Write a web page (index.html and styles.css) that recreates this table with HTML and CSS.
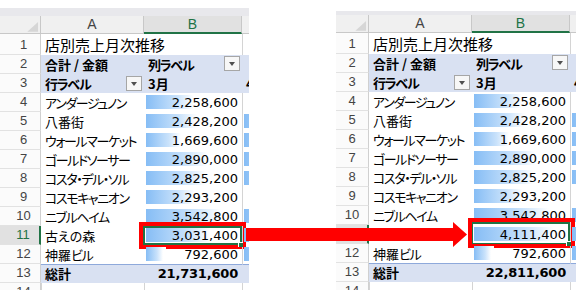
FILE: index.html
```html
<!DOCTYPE html>
<html lang="ja">
<head>
<meta charset="utf-8">
<link rel="stylesheet" href="styles.css">
</head>
<body>
<div class="page">
  <div class="sheet sheet-l">
    <div class="strip"></div>
    <div class="grid">
      <div class="corner"><svg width="41" height="18" viewBox="0 0 41 18"><polygon points="39,6 39,16 28,16" fill="#d6d6d6"/></svg></div>
      <div class="ch">A</div><div class="ch ch-sel">B</div><div class="ch ch-c"></div>

      <div class="rh">1</div><div class="cell title">店別売上月次推移</div><div class="cell cc gl"></div>

      <div class="rh">2</div><div class="cell pv b">合計 / 金額</div><div class="cell pv b sp"><span class="k1">列ラベル</span><span class="dd"></span></div><div class="cell pv cc"></div>
      <div class="rh">3</div><div class="cell pv b sp"><span class="k1">行ラベル</span><span class="dd dd3"></span></div><div class="cell pv b">3月</div><div class="cell pv b cc">4月</div>

      <div class="rh">4</div><div class="cell k">アンダージュノン</div><div class="cell num" style="background-size:56px 14px">2,258,600</div><div class="cell cc gl"></div>
      <div class="rh">5</div><div class="cell">八番街</div><div class="cell num" style="background-size:60px 14px">2,428,200</div><div class="cell cc bar"></div>
      <div class="rh">6</div><div class="cell k">ウォールマーケット</div><div class="cell num" style="background-size:41px 14px">1,669,600</div><div class="cell cc bar"></div>
      <div class="rh">7</div><div class="cell k">ゴールドソーサー</div><div class="cell num" style="background-size:72px 14px">2,890,000</div><div class="cell cc bar"></div>
      <div class="rh">8</div><div class="cell k">コスタ・デル・ソル</div><div class="cell num" style="background-size:70px 14px">2,825,200</div><div class="cell cc bar"></div>
      <div class="rh">9</div><div class="cell k">コスモキャニオン</div><div class="cell num" style="background-size:57px 14px">2,293,200</div><div class="cell cc gl"></div>
      <div class="rh">10</div><div class="cell k">ニブルヘイム</div><div class="cell num" style="background-size:88px 14px">3,542,800</div><div class="cell cc bar"></div>
      <div class="rh rh-sel">11</div><div class="cell">古えの森</div><div class="cell num sel sel-l" style="background-size:75px 14px">3,031,400<span class="handle"></span></div><div class="cell cc bar"></div>
      <div class="rh">12</div><div class="cell">神羅<span class="k1">ビル</span></div><div class="cell num" style="background-size:20px 14px">792,600</div><div class="cell cc bar"></div>
      <div class="rh">13</div><div class="cell tot b">総計</div><div class="cell tot num bn">21,731,600</div><div class="cell tot cc"></div>
      <div class="rh">14</div><div class="cell gl"></div><div class="cell gl"></div><div class="cell cc gl"></div>
    </div>
  </div>

  <div class="sheet sheet-r">
    <div class="strip"></div>
    <div class="grid">
      <div class="corner"><svg width="33" height="18" viewBox="0 0 33 18"><polygon points="31,6 31,16 20,16" fill="#d6d6d6"/></svg></div>
      <div class="ch">A</div><div class="ch ch-sel">B</div><div class="ch ch-c"></div>

      <div class="rh">1</div><div class="cell title">店別売上月次推移</div><div class="cell cc gl"></div>

      <div class="rh">2</div><div class="cell pv b">合計 / 金額</div><div class="cell pv b sp"><span class="k1">列ラベル</span><span class="dd"></span></div><div class="cell pv cc"></div>
      <div class="rh">3</div><div class="cell pv b sp"><span class="k1">行ラベル</span><span class="dd dd3"></span></div><div class="cell pv b">3月</div><div class="cell pv b cc">4月</div>

      <div class="rh">4</div><div class="cell k">アンダージュノン</div><div class="cell num" style="background-size:56px 14px">2,258,600</div><div class="cell cc gl"></div>
      <div class="rh">5</div><div class="cell">八番街</div><div class="cell num" style="background-size:60px 14px">2,428,200</div><div class="cell cc bar"></div>
      <div class="rh">6</div><div class="cell k">ウォールマーケット</div><div class="cell num" style="background-size:41px 14px">1,669,600</div><div class="cell cc bar"></div>
      <div class="rh">7</div><div class="cell k">ゴールドソーサー</div><div class="cell num" style="background-size:72px 14px">2,890,000</div><div class="cell cc bar"></div>
      <div class="rh">8</div><div class="cell k">コスタ・デル・ソル</div><div class="cell num" style="background-size:70px 14px">2,825,200</div><div class="cell cc bar"></div>
      <div class="rh">9</div><div class="cell k">コスモキャニオン</div><div class="cell num" style="background-size:57px 14px">2,293,200</div><div class="cell cc gl"></div>
      <div class="rh">10</div><div class="cell k">ニブルヘイム</div><div class="cell num" style="background-size:88px 14px">3,542,800</div><div class="cell cc bar"></div>
      <div class="rh rh-sel">11</div><div class="cell"></div><div class="cell num sel sel-r" style="background-size:94px 14px">4,111,400<span class="handle"></span></div><div class="cell cc bar"></div>
      <div class="rh">12</div><div class="cell">神羅<span class="k1">ビル</span></div><div class="cell num" style="background-size:20px 14px">792,600</div><div class="cell cc bar"></div>
      <div class="rh">13</div><div class="cell tot b">総計</div><div class="cell tot num bn">22,811,600</div><div class="cell tot cc"></div>
      <div class="rh">14</div><div class="cell gl"></div><div class="cell gl"></div><div class="cell cc gl"></div>
    </div>
  </div>

  <svg class="arrow" width="586" height="290" viewBox="0 0 586 290">
    <polygon points="246,228 453,228 453,222 467,234.5 453,247 453,241 246,241" fill="#ff0000"/>
  </svg>
</div>
</body>
</html>
```

FILE: styles.css
```css
* { box-sizing: border-box; }

body {
  margin: 0;
  background: #ffffff;
}

.page {
  position: relative;
  width: 586px;
  height: 290px;
  overflow: hidden;
  display: flex;
  gap: 87px;
  font-family: "Noto Sans CJK JP", sans-serif;
  color: #000;
}

.sheet {
  flex: none;
  overflow: hidden;
  height: 290px;
}

.sheet-l { width: 249px; padding-top: 8px; }
.sheet-r { width: 240px; padding-top: 11px; }

.strip { background: #e8e8ec; }
.sheet-l .strip { height: 8px; }
.sheet-r .strip { height: 4px; }

.grid {
  display: grid;
  grid-template-rows: 18px 21px repeat(12, 19px) 19px;
}

.sheet-l .grid { grid-template-columns: 41px 103px 98px 7px; }
.sheet-r .grid { grid-template-columns: 33px 103px 98px 6px; }

/* headers */
.corner {
  background: #f0f0f0;
  border-right: 1px solid #c8c8c8;
  border-bottom: 1px solid #c8c8c8;
  display: flex;
}
.corner svg { display: block; }

.ch {
  background: #f0f0f0;
  border-right: 1px solid #c8c8c8;
  border-bottom: 1px solid #c8c8c8;
  font-family: "Liberation Sans", sans-serif;
  font-size: 14px;
  line-height: 17px;
  color: #444;
  text-align: center;
}
.ch-sel {
  background: #e1e1e1;
  color: #217346;
  border-bottom: 2px solid #217346;
}
.ch-c { border-right: none; }

.rh {
  background: #fbfbfb;
  border-right: 1px solid #d0d0d0;
  border-bottom: 1px solid #e2e2e2;
  font-family: "Liberation Sans", sans-serif;
  font-size: 13px;
  line-height: 18px;
  color: #444;
  display: flex;
  align-items: flex-end;
  justify-content: center;
}
.sheet-l .rh { padding-left: 7px; }
.rh-sel {
  background: #e1e1e1;
  color: #217346;
  border-right: 2px solid #217346;
}

/* cells */
.cell {
  position: relative;
  display: flex;
  align-items: flex-end;
  padding: 0 3px 0 4px;
  font-size: 13px;
  line-height: 19px;
  white-space: nowrap;
  font-feature-settings: "palt" 1;
}

.k { letter-spacing: -1.4px; }
.k1 { letter-spacing: -1.2px; }

.title {
  grid-column: span 2;
  font-size: 15px;
  line-height: 21px;
}

.gl { border-left: 1px solid #d4d4d4; }
.cc { overflow: hidden; padding-left: 3px; }
.cc.gl, .cc.bar, .cc.pv, .cc.tot { border-left: 1px solid #d4d4d4; }
.cc.pv, .cc.tot { border-left-color: transparent; }

.pv { background: #d9e1f2; }
.b { font-weight: 700; }
.sp { justify-content: space-between; padding-right: 2px; }

.dd {
  align-self: flex-start;
  margin-top: 1px;
  width: 16px;
  height: 15px;
  border: 1px solid #a6a6a6;
  background: #f7f7f7;
  position: relative;
  flex: none;
}
.dd3 { margin-top: 2px; }
.dd::after {
  content: "";
  position: absolute;
  left: 4px;
  top: 5px;
  border-left: 3.5px solid transparent;
  border-right: 3.5px solid transparent;
  border-top: 4px solid #505050;
}

.num {
  justify-content: flex-end;
  padding-right: 4px;
  font-family: "DejaVu Sans", sans-serif;
  font-size: 13px;
  line-height: 18px;
  background-image: linear-gradient(to right, #86bdf5, #c9e2fb 55%, #ffffff 85%);
  background-repeat: no-repeat;
  background-position: 2px 2px;
}

.bar {
  background-image: linear-gradient(to right, #86bdf5, #c9e2fb 55%, #ffffff 85%);
  background-repeat: no-repeat;
  background-position: 1px 2px;
  background-size: 60px 14px;
}

.tot {
  background: #d9e1f2;
  border-top: 1px solid #8ea9db;
  line-height: 18px;
}
.tot.num { background-image: none; }
.bn {
  font-weight: 700;
  letter-spacing: -0.2px;
}

/* selection */
.sel { overflow: visible; }
.sel::before {
  content: "";
  position: absolute;
  left: -1px; top: 0; right: 0; bottom: 0;
  border: 2px solid #217346;
}
.sel::after {
  content: "";
  position: absolute;
  left: -5px; top: -4px; right: -4px; bottom: -4px;
  border: 4px solid #ff0000;
}
.sel-r::before { top: -3px; bottom: -1px; }
.sel-r::after { left: -4px; top: -7px; right: -5px; bottom: -4px; }

.handle {
  position: absolute;
  right: -1px;
  bottom: -2px;
  width: 5px;
  height: 5px;
  background: #217346;
  border-left: 1px solid #fff;
  border-top: 1px solid #fff;
  z-index: 2;
}

.arrow {
  position: absolute;
  left: 0;
  top: 0;
  pointer-events: none;
}
```
